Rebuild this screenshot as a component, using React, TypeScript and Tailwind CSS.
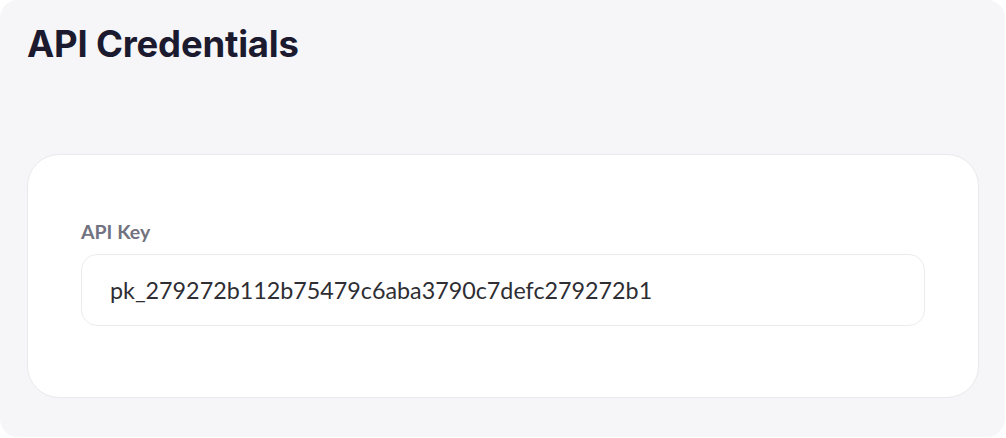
export default function App() {
  return (
    <div className="w-[1006px] h-[438px] bg-white">
      <div className="w-[1005px] h-[437px] rounded-[18px] bg-[#f6f6f9] pl-[27px] pr-[26px] pt-[21px]">
        <h1 className="font-['Inter',sans-serif] text-[36.5px] font-bold leading-[46px] tracking-[-0.2px] text-[#1b1a2e]">
          API Credentials
        </h1>
        <div className="mt-[87px] h-[244px] rounded-[32px] border border-[#e9e9ee] bg-white px-[53px] pt-[65px]">
          <label className="block font-['Lato',sans-serif] text-[19.5px] font-bold leading-[24px] text-[#727280]">
            API Key
          </label>
          <div className="mt-[10px] flex h-[72px] items-center rounded-[16px] border border-[#ececf0] px-[28px] font-['Lato',sans-serif] text-[23.3px] text-[#2e2e33]">
            pk_279272b112b75479c6aba3790c7defc279272b1
          </div>
        </div>
      </div>
    </div>
  );
}
